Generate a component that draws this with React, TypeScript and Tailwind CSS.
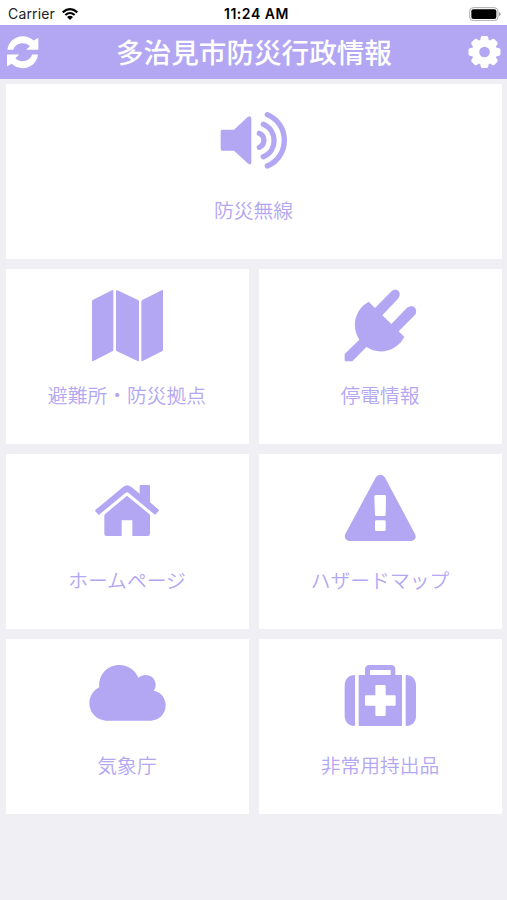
import type { ReactNode } from "react";

const jp = "font-['Noto_Sans_CJK_JP',sans-serif]";

function Icon({ box, children }: { box: string; children: ReactNode }) {
  return (
    <svg viewBox={box} className="h-20 w-20 shrink-0 fill-current" aria-hidden="true">
      {children}
    </svg>
  );
}

function Tile({ label, wide, children }: { label: string; wide?: boolean; children: ReactNode }) {
  return (
    <button
      className={`flex h-[175px] flex-col items-center bg-white pt-[17px] pr-px text-[#b3a6f3] ${wide ? "col-span-2" : ""}`}
    >
      {children}
      <span className={`mt-[14px] text-[19.8px] leading-[30px] font-[350] whitespace-nowrap ${jp}`}>{label}</span>
    </button>
  );
}

function StatusBar() {
  return (
    <div className="flex h-[25px] items-center justify-between bg-white pt-[3px] pr-[6px] pl-[8px] font-['Inter',sans-serif] text-black">
      <div className="flex w-[120px] items-center gap-[7px]">
        <span className="text-[14px] leading-none tracking-[0.15px] text-[#222]">Carrier</span>
        <svg viewBox="0 0 48 36" className="h-3 w-4" fill="none" stroke="currentColor" strokeWidth="6.5">
          <path d="M2 13Q24 -6 46 13" />
          <path d="M10 21Q24 9 38 21" />
          <path d="M24 36L15 27Q24 20 33 27Z" fill="currentColor" stroke="none" />
        </svg>
      </div>
      <span className="pl-[4px] text-center text-[14px] leading-none font-semibold tracking-[0.55px] whitespace-nowrap">
        11:24 AM
      </span>
      <div className="flex w-[120px] justify-end">
        <svg viewBox="0 0 96 44" className="h-[14.67px] w-8">
          <rect x="2" y="2" width="85" height="39" rx="11" fill="none" stroke="#aaa" strokeWidth="3" />
          <rect x="7" y="7" width="75" height="29" rx="6" />
          <path d="M90 15Q99 21.500 90 28Z" fill="#999" />
        </svg>
      </div>
    </div>
  );
}

function Header() {
  return (
    <header className="flex h-[54px] items-center justify-between bg-[#b3a6f3] px-[6px] text-white">
      <button aria-label="更新">
        <svg viewBox="19 106.500 99 99" className="h-[33px] w-[33px] fill-current">
          <path d="M23 148C26 123 46 107 69 107C82 107 93 112 102 120L116 112V148H79L91 137C85 131 78 128 69 128C55 128 44 136 41 148Z" />
          <path d="M115 162C112 187 92 203 69 203C56 203 45 198 36 190L22 198V162H59L47 173C53 179 60 182 69 182C83 182 94 174 97 162Z" />
        </svg>
      </button>
      <h1 className={`pl-px text-[27.6px] leading-none font-medium whitespace-nowrap ${jp}`}>多治見市防災行政情報</h1>
      <button aria-label="設定">
        <svg viewBox="-49.500 -48 99 99" className="h-[33px] w-[33px] fill-current">
          <circle r="37" />
          {[0, 45, 90, 135].map((a) => (
            <path
              key={a}
              transform={`rotate(${a})`}
              d="M-15 -33Q-12 -36 -11 -44Q-10 -48 -6 -48H6Q10 -48 11 -44Q12 -36 15 -33V33Q12 36 11 44Q10 48 6 48H-6Q-10 48 -11 44Q-12 36 -15 33Z"
            />
          ))}
          <circle r="16" className="fill-[#b3a6f3]" />
        </svg>
      </button>
    </header>
  );
}

export default function App() {
  return (
    <div className="h-[900px] w-[507px] overflow-hidden bg-[#efeff4]">
      <StatusBar />
      <Header />
      <main className="grid grid-cols-2 gap-[10px] pt-[5px] pr-[5px] pl-[6px]">
        <Tile label="防災無線" wide>
          <Icon box="102 33 240 240">
            <path d="M127 119H162L203 81Q214 75 214 87V216Q214 228 203 220L162 182H127Q122 182 122 177V124Q122 119 127 119Z" />
            <g fill="none" stroke="currentColor" strokeWidth="16" strokeLinecap="round">
              <path d="M238 130A23 23 0 0 1 238 172" />
              <path d="M250 103C293 121 293 183 250 200" />
              <path d="M262 74C330 103 330 199 262 228" />
            </g>
          </Icon>
        </Tile>
        <Tile label="避難所・防災拠点">
          <Icon box="171 78 240 240">
            <path d="M186 124Q186 121 189 119L246 91Q250 89 250 93V269Q250 272 247 274L190 303Q186 305 186 301Z" />
            <path d="M258 94Q258 89 262 91L324 120Q327 122 327 125V301Q327 305 323 303L261 274Q258 272 258 269Z" />
            <path d="M334 125Q334 122 337 120L395 91Q399 89 399 93V269Q399 272 396 274L338 303Q334 305 334 301Z" />
          </Icon>
        </Tile>
        <Tile label="停電情報">
          <Icon box="150 78 240 240">
            <path d="M236 125L255 144L303 95C311 88 321 88 326 94C331 100 330 109 324 116L277 166L304 192L351 143C359 137 370 137 375 143C380 150 380 160 374 166L326 214L343 231A79 79 0 0 1 229 261L187 304H164V282L208 239A79 79 0 0 1 236 125Z" />
          </Icon>
        </Tile>
        <Tile label="ホームページ">
          <Icon box="171 63 240 240">
            <path d="M280 110Q291 101 303 110L329 131V108Q329 105 332 105H357Q360 105 360 108V157L386 179Q388 181 386 183L377 193Q375 195 373 193L296 129Q291 125 286 129L209 193Q206 196 204 193L196 184Q194 181 197 179Z" />
            <path d="M291 137L360 194V251Q360 258 353 258H307V211H275V258H230Q223 258 223 251V194Z" />
          </Icon>
        </Tile>
        <Tile label="ハザードマップ">
          <Icon box="150 63 240 240">
            <path
              fillRule="evenodd"
              d="M258 81Q271 68 284 81L375 252Q382 268 365 273H177Q160 268 166 252ZM258 135Q253 135 253 140L255 194Q255 198 259 198H283Q287 198 287 194L288 140Q288 135 284 135ZM259 211Q255 211 255 215V239Q255 243 259 243H283Q287 243 287 239V215Q287 211 283 211Z"
            />
          </Icon>
        </Tile>
        <Tile label="気象庁">
          <Icon box="171 48 240 240">
            <path d="M228 242C200 241 178 218 178 190C178 169 190 151 208 142C204 105 232 75 268 75C293 75 316 90 325 113C346 96 376 107 377 134C377 141 375 147 371 152C393 156 407 174 407 196C407 222 388 240 364 242Z" />
          </Icon>
        </Tile>
        <Tile label="非常用持出品">
          <Icon box="150 48 240 240">
            <path d="M195 105V258C174 258 164 244 164 227V137C164 119 174 105 195 105Z" />
            <path d="M347 105V258C368 258 378 244 378 227V137C378 119 368 105 347 105Z" />
            <path
              fillRule="evenodd"
              d="M206 105H225V89Q225 75 239 75H303Q316 75 316 89V105H336V258H206ZM240 90V105H302V90ZM259 135Q256 135 256 138V166H228Q225 166 225 169V194Q225 197 228 197H256V225Q256 228 259 228H284Q287 228 287 225V197H314Q317 197 317 194V169Q317 166 314 166H287V138Q287 135 284 135Z"
            />
          </Icon>
        </Tile>
      </main>
    </div>
  );
}
